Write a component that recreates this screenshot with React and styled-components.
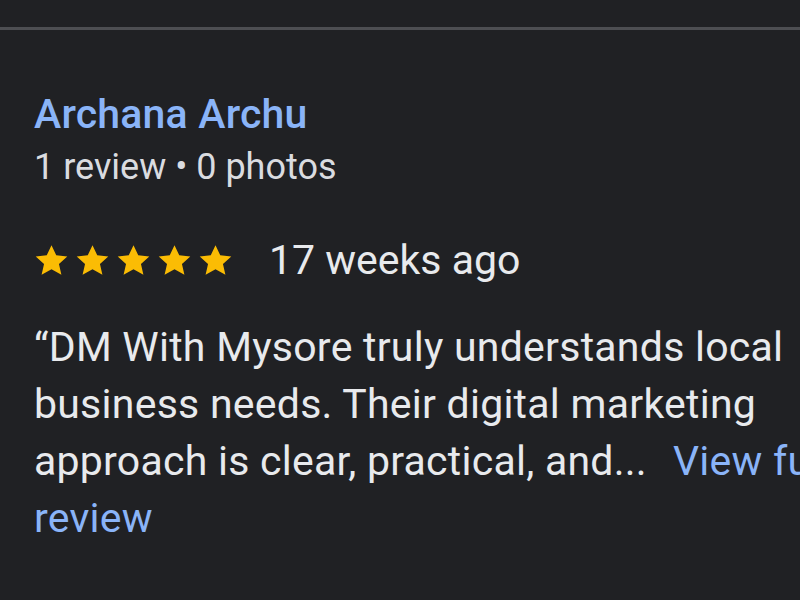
import React from 'react'
import styled, { createGlobalStyle } from 'styled-components'

const Global = createGlobalStyle`
  html, body {
    margin: 0;
    padding: 0;
    background: #202124;
  }
  body {
    font-family: Roboto, "Liberation Sans", sans-serif;
  }
`

const Page = styled.div`
  width: 800px;
  height: 600px;
  overflow: hidden;
  background: #202124;
  display: flex;
  flex-direction: column;
`

const TopGap = styled.div`
  height: 27px;
  border-bottom: 3px solid #4d4e52;
`

const Review = styled.section`
  padding: 62px 0 0 34px;
  display: flex;
  flex-direction: column;
`

const Author = styled.div`
  color: #8ab4f8;
  font-size: 41px;
  font-weight: 500;
  line-height: 44px;
  letter-spacing: 0.2px;
`

const Meta = styled.div`
  color: #dadce0;
  font-size: 36px;
  line-height: 40px;
  margin-top: 11px;
`

const RatingRow = styled.div`
  display: flex;
  align-items: center;
  margin-top: 51px;
  height: 44px;
`

const Stars = styled.div`
  display: flex;
  gap: 6px;
  margin-right: 36px;
`

const When = styled.span`
  color: #e8eaed;
  font-size: 41px;
  line-height: 44px;
`

const Body = styled.p`
  margin: 37px 0 0;
  color: #e8eaed;
  font-size: 41px;
  line-height: 57px;
  letter-spacing: 0.25px;
  width: 900px;
`

const Link = styled.span`
  color: #8ab4f8;
  margin-left: ${p => (p.$gap ? '26px' : '0')};
`

function Star() {
  return (
    <svg width="35" height="33" viewBox="0 0 24 23">
      <path
        d="M12 0.8l3.3 7.1 7.7.8-5.8 5.2 1.7 7.6L12 17.6l-6.9 3.9 1.7-7.6L1 8.7l7.7-.8z"
        fill="#fbbc04"
      />
    </svg>
  )
}

export default function App() {
  return (
    <Page>
      <Global />
      <TopGap />
      <Review>
        <Author>Archana Archu</Author>
        <Meta>1 review • 0 photos</Meta>
        <RatingRow>
          <Stars>
            {[0, 1, 2, 3, 4].map(i => <Star key={i} />)}
          </Stars>
          <When>17 weeks ago</When>
        </RatingRow>
        <Body>
          “DM With Mysore truly understands local<br />
          business needs. Their digital marketing<br />
          approach is clear, practical, and...<Link $gap>View full</Link><br />
          <Link>review</Link>
        </Body>
      </Review>
    </Page>
  )
}
